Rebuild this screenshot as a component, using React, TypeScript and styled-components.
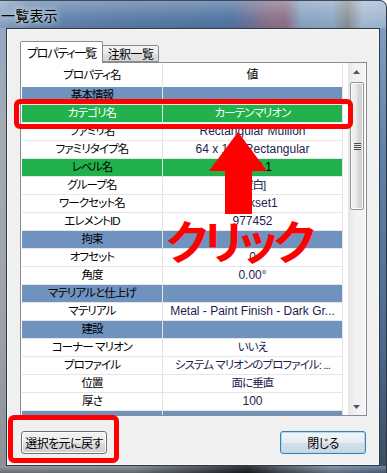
import React from 'react'
import styled, { createGlobalStyle } from 'styled-components'

type RowKind = 'plain' | 'group' | 'picked' | 'green'

interface PropRow {
    name: string,
    value?: string,
    kind?: RowKind
}

const uiFont = `"Liberation Sans", "Noto Sans CJK JP", sans-serif`

// kana / kanji text is drawn tighter, the reference uses a proportional UI font
const hasJapanese = (text: string) => /[\u3040-\u30ff\u4e00-\u9fff]/.test(text)

const rows: PropRow[] = [
    { name: '基本情報', kind: 'group' },
    { name: 'カテゴリ名', value: 'カーテンマリオン', kind: 'picked' },
    { name: 'ファミリ名', value: 'Rectangular Mullion' },
    { name: 'ファミリタイプ名', value: '64 x 150 Rectangular' },
    { name: 'レベル名', value: 'Level 1', kind: 'green' },
    { name: 'グループ名', value: '[空白]' },
    { name: 'ワークセット名', value: 'Workset1' },
    { name: 'エレメントID', value: '977452' },
    { name: '拘束', kind: 'group' },
    { name: 'オフセット', value: '0' },
    { name: '角度', value: '0.00°' },
    { name: 'マテリアルと仕上げ', kind: 'group' },
    { name: 'マテリアル', value: 'Metal - Paint Finish - Dark Gr...' },
    { name: '建設', kind: 'group' },
    { name: 'コーナー マリオン', value: 'いいえ' },
    { name: 'プロファイル', value: 'システム マリオンのプロファイル: ...' },
    { name: '位置', value: '面に垂直' },
    { name: '厚さ', value: '100' },
    { name: '', kind: 'group' },
]

const rowBg: Record<RowKind, string> = {
    plain: '#ffffff',
    group: '#7092be',
    picked: '#22b14c',
    green: '#22b14c',
}

const GlobalStyle = createGlobalStyle`
    html, body {
        margin: 0;
        padding: 0;
        background: #ffffff;
    }
    body {
        font-family: ${uiFont};
        font-feature-settings: "palt";
    }
`

const WindowStyled = styled.div`
    position: relative;
    width: 387px;
    height: 473px;
    display: flex;
    flex-direction: column;
    overflow: hidden;
    border-top-right-radius: 7px;
    background: #6f8db3;
`

const TitleBar = styled.div`
    height: 28px;
    flex: none;
    display: flex;
    align-items: center;
    padding-left: 1px;
    box-sizing: border-box;
    border-top: 1px solid #3b4b60;
    border-right: 1px solid #2b3644;
    border-top-right-radius: 7px;
    background:
        linear-gradient(to bottom, rgba(255, 255, 255, 0.28), rgba(255, 255, 255, 0.05) 60%, rgba(0, 0, 0, 0.04)),
        linear-gradient(to right, #8ea6c3 0, #6585af 8%, #587aa6 30%, #4f72a0 60%, #8a6e88 70%, #8b6f86 74%, #88a2c2 78%, #8da7c5 86%, #8a8f92 90%, #a4bad3 94%, #9fb6d0 100%);
`

const Title = styled.span`
    font-family: ${uiFont};
    font-size: 14px;
    color: #000000;
    letter-spacing: 0.2px;
    text-shadow: 0 0 6px rgba(255, 255, 255, 0.9), 0 0 10px rgba(255, 255, 255, 0.6);
`

const Middle = styled.div`
    flex: 1;
    display: flex;
    min-height: 0;
`

const SideFrame = styled.div<{ $side: 'left' | 'right' }>`
    width: ${p => p.$side === 'left' ? '6px' : '7px'};
    flex: none;
    box-sizing: border-box;
    background: ${p => p.$side === 'left'
        ? 'linear-gradient(to bottom, #93a7c0, #a6abb1 25%, #9da1a7 70%, #8d9096)'
        : 'linear-gradient(to bottom, #7f9dc2, #5f80a9 30%, #4d6b92 70%, #3d4e64)'};
    border-right: ${p => p.$side === 'right' ? '1px solid #2b3644' : 'none'};
`

const BottomFrame = styled.div`
    height: 7px;
    flex: none;
    border-right: 1px solid #2b3644;
    background:
        linear-gradient(to bottom, rgba(255, 255, 255, 0.1), rgba(0, 0, 0, 0.25)),
        linear-gradient(to right, #8b9098 0, #7f8791 35%, #3a3f46 56%, #1e2126 64%, #4b535d 72%, #7c8fa6 86%, #5d7493 100%);
`

const Client = styled.div`
    flex: 1;
    display: flex;
    flex-direction: column;
    padding: 12px 12px 0 13px;
    border: 1px solid #2f3946;
    box-shadow: inset 0 0 0 1px rgba(255, 255, 255, 0.6);
    background: #f0f0f0;
`

const TabStrip = styled.div`
    height: 21px;
    display: flex;
    align-items: flex-end;
`

const Tab = styled.div<{ $active?: boolean }>`
    position: relative;
    z-index: ${p => p.$active ? 1 : 0};
    box-sizing: border-box;
    width: ${p => p.$active ? '83px' : '57px'};
    height: ${p => p.$active ? '22px' : '17px'};
    margin-bottom: ${p => p.$active ? '-1px' : '0'};
    margin-left: ${p => p.$active ? '0' : '-1px'};
    display: flex;
    align-items: center;
    justify-content: center;
    border: 1px solid #898c95;
    border-bottom: ${p => p.$active ? 'none' : '1px solid #898c95'};
    border-radius: 2px 2px 0 0;
    background: ${p => p.$active ? '#ffffff' : 'linear-gradient(to bottom, #f4f4f4, #e9e9e9 50%, #dddddd 51%, #d6d6d6)'};
    font-size: 12px;
    letter-spacing: ${p => p.$active ? '-1.2px' : '-0.6px'};
    color: #000000;
`

const Panel = styled.div`
    height: 354px;
    box-sizing: border-box;
    display: flex;
    border: 1px solid #898c95;
    background: #ffffff;
`

const Grid = styled.div`
    width: 322px;
    flex: none;
    box-sizing: border-box;
    border-left: 1px solid #ffffff;
    border-right: 1px solid #e2e2e2;
    overflow: hidden;
`

const HeaderRow = styled.div`
    height: 24px;
    display: flex;
`

const Row = styled.div`
    height: 18px;
    box-sizing: border-box;
    display: flex;
    border-bottom: 1px solid #e6e6e6;
`

const Cell = styled.div<{ $kind: RowKind, $value?: boolean, $jp?: boolean, $head?: boolean }>`
    box-sizing: border-box;
    ${p => p.$value ? 'flex: 1;' : 'width: 141px; border-right: 1px solid #e4e4e4;'}
    display: flex;
    align-items: center;
    justify-content: center;
    white-space: pre;
    overflow: hidden;
    font-size: ${p => p.$jp ? '11.5px' : '12px'};
    line-height: 17px;
    letter-spacing: ${p => p.$jp ? '-0.9px' : '0'};
    background: ${p => rowBg[p.$kind]};
    color: ${p => p.$kind === 'picked' ? '#ffffff'
        : p.$value && !p.$head && p.$kind === 'plain' ? '#1d1d4e' : '#000000'};
`

const ScrollBar = styled.div`
    width: 17px;
    flex: none;
    margin-left: 5px;
    display: flex;
    flex-direction: column;
    background: linear-gradient(to right, #e6e6e6, #f1f1f1 40%, #f4f4f4);
`

const ArrowButton = styled.div`
    height: 17px;
    flex: none;
    display: flex;
    align-items: center;
    justify-content: center;
`

const Track = styled.div`
    flex: 1;
    padding-top: 2px;
`

const Thumb = styled.div`
    height: 128px;
    width: 14px;
    margin-left: 2px;
    box-sizing: border-box;
    border: 1px solid #959595;
    border-radius: 2px;
    box-shadow: inset 0 0 0 1px rgba(255, 255, 255, 0.8);
    background: linear-gradient(to right, #f3f3f3, #e9e9e9 45%, #d9d9d9 55%, #cfcfcf);
    display: flex;
    align-items: center;
    justify-content: center;
`

const Grip = styled.div`
    width: 7px;
    height: 7px;
    background: repeating-linear-gradient(to bottom, #4a4a4a 0, #4a4a4a 1px, #e8e8e8 1px, #e8e8e8 2px);
`

const ButtonRow = styled.div`
    margin-top: 15px;
    padding: 0 1px;
    display: flex;
    justify-content: space-between;
`

const WinButton = styled.button<{ $default?: boolean }>`
    width: 86px;
    height: 23px;
    padding: 0;
    font-family: ${uiFont};
    font-feature-settings: "palt";
    font-size: 12px;
    letter-spacing: -0.6px;
    color: #000000;
    border-radius: 3px;
    border: 1px solid ${p => p.$default ? '#3c7fb1' : '#707070'};
    box-shadow: inset 0 0 0 1px ${p => p.$default ? '#a9dbf5' : '#fbfbfb'};
    background: ${p => p.$default
        ? 'linear-gradient(to bottom, #f1f5f8, #e6edf2 50%, #d5e0e8 51%, #c9d7e2)'
        : 'linear-gradient(to bottom, #f2f2f2, #ebebeb 50%, #dddddd 51%, #cfcfcf)'};
`

const Highlight = styled.div<{ $left: number, $top: number, $w: number, $h: number }>`
    position: absolute;
    left: ${p => p.$left}px;
    top: ${p => p.$top}px;
    width: ${p => p.$w}px;
    height: ${p => p.$h}px;
    box-sizing: border-box;
    border: 5px solid #ff0000;
    border-radius: 6px;
    pointer-events: none;
`

const ArrowMark = styled.svg`
    position: absolute;
    left: 200px;
    top: 125px;
`

const ClickLabel = styled.div`
    position: absolute;
    left: 166px;
    top: 216px;
    font-family: "Noto Sans CJK JP", sans-serif;
    font-feature-settings: "palt";
    font-weight: 700;
    font-size: 46px;
    letter-spacing: -4px;
    line-height: 1;
    color: #ff0000;
    white-space: nowrap;
`

const Triangle = ({ down }: { down?: boolean }) => (
    <svg width="7" height="4" viewBox="0 0 7 4">
        <polygon points={down ? '0,0 7,0 3.5,4' : '0,4 7,4 3.5,0'} fill="#4f5560" />
    </svg>
)

export default function App() {
    return (
        <>
            <GlobalStyle />
            <WindowStyled>
                <TitleBar>
                    <Title>一覧表示</Title>
                </TitleBar>
                <Middle>
                    <SideFrame $side='left' />
                    <Client>
                        <TabStrip>
                            <Tab $active>プロパティ一覧</Tab>
                            <Tab>注釈一覧</Tab>
                        </TabStrip>
                        <Panel>
                            <Grid>
                                <HeaderRow>
                                    <Cell $kind='plain' $jp>プロパティ名</Cell>
                                    <Cell $kind='plain' $value $head>値</Cell>
                                </HeaderRow>
                                {rows.map((cur, idx) => {
                                    const kind = cur.kind ?? 'plain'
                                    const value = cur.value ?? ''
                                    return (
                                        <Row key={idx}>
                                            <Cell $kind={kind} $jp={hasJapanese(cur.name)}>{cur.name}</Cell>
                                            <Cell $kind={kind} $value $jp={hasJapanese(value)}>{value}</Cell>
                                        </Row>
                                    )
                                })}
                            </Grid>
                            <ScrollBar>
                                <ArrowButton><Triangle /></ArrowButton>
                                <Track>
                                    <Thumb><Grip /></Thumb>
                                </Track>
                                <ArrowButton><Triangle down /></ArrowButton>
                            </ScrollBar>
                        </Panel>
                        <ButtonRow>
                            <WinButton>選択を元に戻す</WinButton>
                            <WinButton $default>閉じる</WinButton>
                        </ButtonRow>
                    </Client>
                    <SideFrame $side='right' />
                </Middle>
                <BottomFrame />

                <Highlight $left={14} $top={99} $w={339} $h={30} />
                <Highlight $left={8} $top={415} $w={111} $h={48} />
                <ArrowMark width="75" height="95" viewBox="0 0 75 95">
                    <polygon points="38,7 9,46 25,46 25,89 52,89 52,46 67,46" fill="#ff0000" />
                </ArrowMark>
                <ClickLabel>クリック</ClickLabel>
            </WindowStyled>
        </>
    )
}
